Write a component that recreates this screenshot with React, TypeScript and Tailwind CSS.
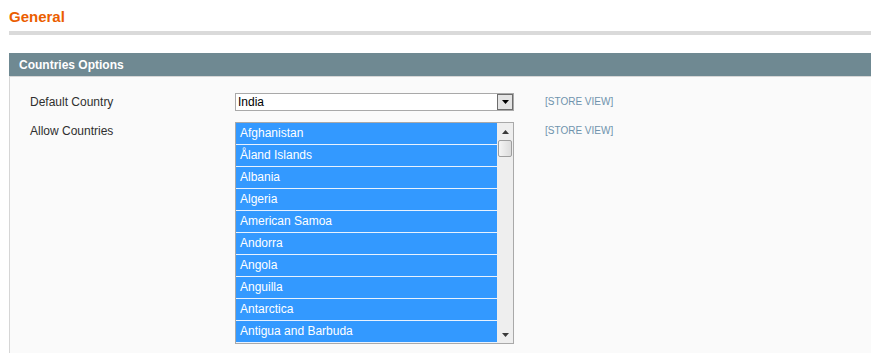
const countries = [
  'Afghanistan',
  'Åland Islands',
  'Albania',
  'Algeria',
  'American Samoa',
  'Andorra',
  'Angola',
  'Anguilla',
  'Antarctica',
  'Antigua and Barbuda',
]

function ArrowDown({ className = '' }: { className?: string }) {
  return (
    <svg width="7" height="4" viewBox="0 0 7 4" className={className}>
      <path d="M0 0h7L3.5 4z" fill="currentColor" />
    </svg>
  )
}

function ArrowUp({ className = '' }: { className?: string }) {
  return (
    <svg width="7" height="4" viewBox="0 0 7 4" className={className}>
      <path d="M0 4h7L3.5 0z" fill="currentColor" />
    </svg>
  )
}

export default function App() {
  return (
    <div className="h-[353px] w-[871px] overflow-hidden bg-white pl-[9px] font-['Liberation_Sans',Arial,sans-serif] text-[12px] text-[#2f2f2f]">
      <div className="pt-[8px]">
        <h2 className="text-[15px] font-bold leading-[18px] text-[#eb5e00]">General</h2>
        <div className="mt-[5px] h-[4px] bg-[#dadada]" />
      </div>

      <div className="mt-[18px] h-[300px] border-l border-[#d6d6d6] bg-[#fafafa]">
        <div className="-ml-px flex h-[24px] items-center border-b border-[#d6d6d6] bg-[#6f8992] pl-[10px]">
          <span className="text-[12px] font-bold text-white">Countries Options</span>
        </div>

        <div className="pt-[16px]">
          {/* default country */}
          <div className="flex items-start">
            <div className="w-[225px] pl-[20px] pt-[2px] leading-[15px]">Default Country</div>
            <div className="flex h-[18px] w-[279px] items-stretch border border-[#a9a9a9] bg-white">
              <div className="flex-1 pl-[2px] text-[12px] leading-[16px] text-black">India</div>
              <div className="flex w-[16px] items-center justify-center border border-[#6d6d6d] bg-[#e4e4e4] text-black">
                <ArrowDown />
              </div>
            </div>
            <div className="pl-[31px] pt-[1px] text-[10px] leading-[15px] text-[#6f93ad]">[STORE VIEW]</div>
          </div>

          {/* allow countries */}
          <div className="mt-[11px] flex items-start">
            <div className="w-[225px] pl-[20px] pt-[2px] leading-[15px]">Allow Countries</div>
            <div className="flex h-[222px] w-[279px] border border-[#a9a9a9] bg-white">
              <ul className="flex-1">
                {countries.map((c) => (
                  <li
                    key={c}
                    className="h-[22px] border-b border-[#e8f2ff] bg-[#3399ff] pl-[4px] leading-[21px] text-white"
                  >
                    {c}
                  </li>
                ))}
              </ul>
              <div className="flex w-[16px] flex-col bg-[#eeeeee]">
                <div className="flex h-[17px] items-center justify-center text-[#3a3a3a]">
                  <ArrowUp />
                </div>
                <div className="mx-[1px] h-[17px] rounded-[2px] border border-[#9e9e9e] bg-gradient-to-r from-[#f4f4f4] to-[#dcdcdc]" />
                <div className="flex-1" />
                <div className="flex h-[17px] items-center justify-center text-[#3a3a3a]">
                  <ArrowDown />
                </div>
              </div>
            </div>
            <div className="pl-[31px] pt-[1px] text-[10px] leading-[15px] text-[#6f93ad]">[STORE VIEW]</div>
          </div>
        </div>
      </div>
    </div>
  )
}
